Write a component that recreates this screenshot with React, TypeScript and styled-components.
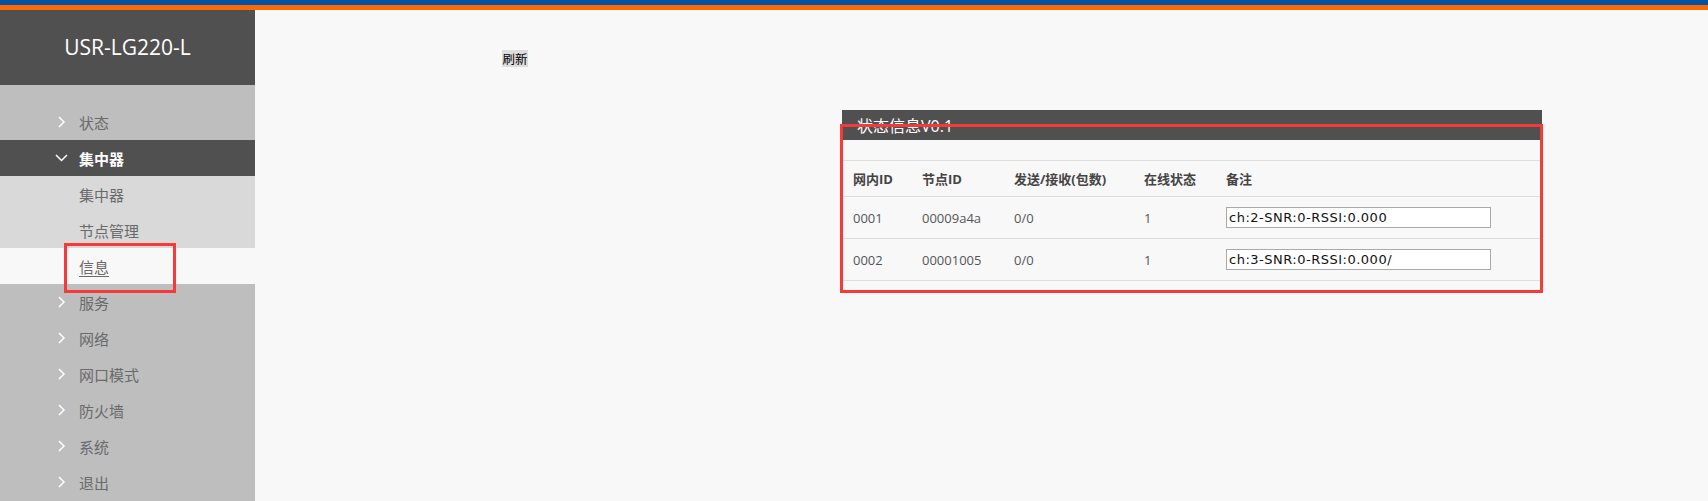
import React from "react";
import styled, { createGlobalStyle } from "styled-components";

const GlobalStyle = createGlobalStyle`
  html, body {
    margin: 0;
    padding: 0;
    background: #f8f8f8;
    font-family: "Open Sans", "Noto Sans CJK SC", sans-serif;
  }
`;

const Page = styled.div`
  width: 1708px;
  height: 501px;
  display: flex;
  flex-direction: column;
  overflow: hidden;
`;

const TopBar = styled.div`
  height: 5px;
  background: #0053a2;
  border-bottom: 5px solid #ff6a00;
`;

const Body = styled.div`
  flex: 1;
  display: flex;
`;

const Sidebar = styled.aside`
  position: relative;
  width: 255px;
  background: #bebebe;
  display: flex;
  flex-direction: column;
`;

const Brand = styled.div`
  height: 75px;
  background: #505050;
  color: #fff;
  font-size: 21px;
  display: flex;
  align-items: center;
  justify-content: center;
  padding-bottom: 2px;
  box-sizing: border-box;
`;

const Menu = styled.ul`
  list-style: none;
  margin: 0;
  padding: 19px 0 0;
`;

const Item = styled.li<{ $variant?: "open" | "sub" | "current" }>`
  height: 36px;
  display: flex;
  align-items: center;
  padding-left: ${(p) => (p.$variant === "open" ? "55px" : "58px")};
  font-size: 15px;
  color: #6a6a6a;
  background: ${(p) =>
    p.$variant === "open"
      ? "#505050"
      : p.$variant === "sub"
      ? "#d9d9d9"
      : p.$variant === "current"
      ? "#f8f8f8"
      : "transparent"};
  ${(p) => p.$variant === "open" && "color: #fff; font-weight: bold;"}
`;

const Arrow = styled.span<{ $wide?: boolean }>`
  width: ${(p) => (p.$wide ? "24px" : "21px")};
  display: flex;
  align-items: center;
`;

const Label = styled.span<{ $underline?: boolean }>`
  text-decoration: ${(p) => (p.$underline ? "underline" : "none")};
  text-underline-offset: 3px;
`;

const Mark = styled.div<{ $l: number; $t: number; $w: number; $h: number }>`
  position: absolute;
  left: ${(p) => p.$l}px;
  top: ${(p) => p.$t}px;
  width: ${(p) => p.$w}px;
  height: ${(p) => p.$h}px;
  border: 3px solid #f63a3a;
  box-sizing: border-box;
  pointer-events: none;
`;

const Main = styled.main`
  flex: 1;
  padding: 40px 0 0 247px;
`;

const Refresh = styled.button`
  display: block;
  border: none;
  padding: 0;
  height: 17px;
  width: 26px;
  background: #dddddd;
  font-family: "Noto Sans CJK SC", sans-serif;
  font-size: 12.5px;
  line-height: 17px;
  color: #000;
`;

const Panel = styled.section`
  position: relative;
  width: 700px;
  margin: 43px 0 0 340px;
`;

const PanelHead = styled.div`
  height: 30px;
  background: #505050;
  color: #fff;
  font-size: 16px;
  padding-left: 15px;
  display: flex;
  align-items: center;
`;

const Table = styled.table`
  width: 100%;
  margin-top: 20px;
  border-collapse: collapse;
  border-top: 1px solid #dddddd;
  font-size: 13px;
  color: #555;
`;

const Th = styled.th<{ $w?: number }>`
  height: 35px;
  text-align: left;
  padding: 0 0 0 11px;
  font-weight: bold;
  color: #444;
  border-bottom: 1px solid #dddddd;
  ${(p) => (p.$w ? `width: ${p.$w}px;` : "")}
`;

const Td = styled.td`
  height: 41px;
  padding: 0 0 0 11px;
  border-bottom: 1px solid #dddddd;
`;

const Note = styled.input`
  width: 265px;
  height: 21px;
  box-sizing: border-box;
  border: 1px solid #a9a9a9;
  background: #fff;
  padding: 0 2px;
  font-family: "DejaVu Sans", Verdana, sans-serif;
  font-size: 13px;
  letter-spacing: 0.5px;
  color: #111;
  display: block;
`;

const Chevron = ({ open }: { open?: boolean }) =>
  open ? (
    <svg width="13" height="8" viewBox="0 0 13 8">
      <polyline points="1,1 6.5,6.5 12,1" fill="none" stroke="#fff" strokeWidth="1.5" />
    </svg>
  ) : (
    <svg width="7" height="12" viewBox="0 0 7 12">
      <polyline points="1,1 6,6 1,11" fill="none" stroke="#fff" strokeWidth="1.5" />
    </svg>
  );

const rows = [
  { net: "0001", node: "00009a4a", io: "0/0", online: "1", note: "ch:2-SNR:0-RSSI:0.000" },
  { net: "0002", node: "00001005", io: "0/0", online: "1", note: "ch:3-SNR:0-RSSI:0.000/" },
];

const tail = ["服务", "网络", "网口模式", "防火墙", "系统", "退出"];

function App() {
  return (
    <Page>
      <GlobalStyle />
      <TopBar />
      <Body>
        <Sidebar>
          <Brand>USR-LG220-L</Brand>
          <Menu>
            <Item>
              <Arrow>
                <Chevron />
              </Arrow>
              <Label>状态</Label>
            </Item>
            <Item $variant="open">
              <Arrow $wide>
                <Chevron open />
              </Arrow>
              <Label>集中器</Label>
            </Item>
            <Item $variant="sub">
              <Arrow />
              <Label>集中器</Label>
            </Item>
            <Item $variant="sub">
              <Arrow />
              <Label>节点管理</Label>
            </Item>
            <Item $variant="current">
              <Arrow />
              <Label $underline>信息</Label>
            </Item>
            {tail.map((t) => (
              <Item key={t}>
                <Arrow>
                  <Chevron />
                </Arrow>
                <Label>{t}</Label>
              </Item>
            ))}
          </Menu>
          <Mark $l={64} $t={233} $w={112} $h={50} />
        </Sidebar>
        <Main>
          <Refresh>刷新</Refresh>
          <Panel>
            <PanelHead>状态信息V0.1</PanelHead>
            <Table>
              <thead>
                <tr>
                  <Th $w={58}>网内ID</Th>
                  <Th $w={81}>节点ID</Th>
                  <Th $w={119}>发送/接收(包数)</Th>
                  <Th $w={71}>在线状态</Th>
                  <Th>备注</Th>
                </tr>
              </thead>
              <tbody>
                {rows.map((r) => (
                  <tr key={r.net}>
                    <Td>{r.net}</Td>
                    <Td>{r.node}</Td>
                    <Td>{r.io}</Td>
                    <Td>{r.online}</Td>
                    <Td>
                      <Note defaultValue={r.note} />
                    </Td>
                  </tr>
                ))}
              </tbody>
            </Table>
            <Mark $l={-2} $t={14} $w={703} $h={169} />
          </Panel>
        </Main>
      </Body>
    </Page>
  );
}

export default App;
